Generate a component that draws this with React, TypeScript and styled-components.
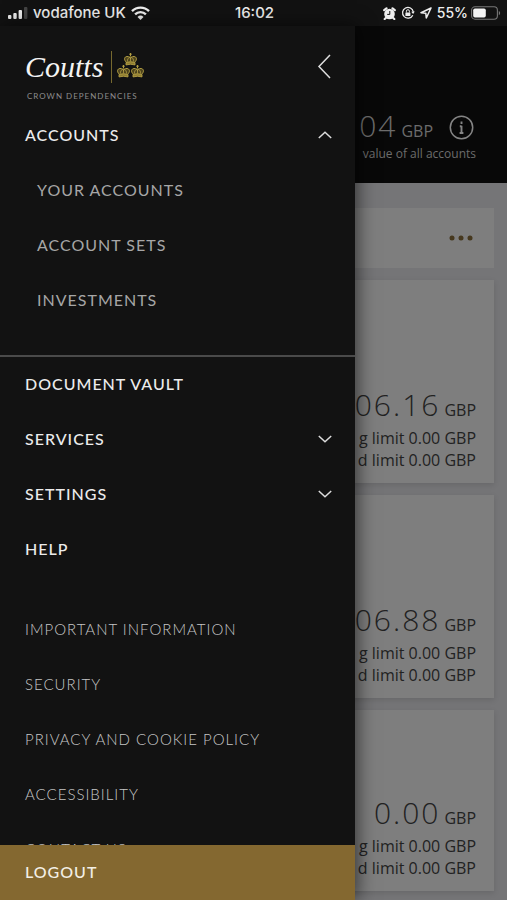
import React from "react";
import styled, { createGlobalStyle } from "styled-components";

const GlobalStyle = createGlobalStyle`
  *, *::before, *::after { box-sizing: border-box; }
  body { margin: 0; background: #121212; }
  button { font: inherit; color: inherit; background: none; border: 0; padding: 0; cursor: pointer; }
`;

const Shell = styled.div`
  display: flex;
  flex-direction: column;
  height: 100vh;
  overflow: hidden;
  background: #121212;
  font-family: "Open Sans", sans-serif;
`;

const StatusBar = styled.header`
  display: grid;
  grid-template-columns: 1fr auto 1fr;
  align-items: center;
  flex: none;
  height: 26px;
  padding: 0 6px 0 8px;
  color: #eeeeee;
  font: 500 15px/18px Inter, sans-serif;
`;

const StatusGroup = styled.div<{ $end?: boolean }>`
  display: flex;
  align-items: center;
  justify-content: ${(p) => (p.$end ? "flex-end" : "flex-start")};
  gap: 5px;
  white-space: nowrap;
`;

const Charge = styled.span`
  display: flex;
  align-items: center;
  gap: 3px;
  font-size: 14px;
`;

const Icon = styled.svg`
  display: block;
  flex: none;
`;

const Stage = styled.div`
  flex: 1;
  min-height: 0;
  display: grid;
  grid-template: minmax(0, 1fr) / minmax(0, 1fr);
`;

const Content = styled.main`
  grid-area: 1 / 1;
  overflow: hidden;
  background: #757577;
  color: #222222;
`;

const Summary = styled.section`
  display: flex;
  flex-direction: column;
  align-items: flex-end;
  height: 157px;
  padding: 82px 31px 0 0;
  background: #080808;
  color: #6c6c6c;
`;

const SummaryRow = styled.div`
  display: flex;
  align-items: center;
  gap: 16px;
  height: 38px;
  margin-right: 2px;
`;

const Caption = styled.p`
  margin: 0;
  font-size: 12px;
  line-height: 16px;
`;

const Amount = styled.p`
  display: flex;
  align-items: baseline;
  justify-content: flex-end;
  gap: 4px;
  margin: 0;
  padding-top: 2px;
  font-size: 16px;
  line-height: 34px;
  white-space: nowrap;
`;

const Figure = styled.span`
  font-size: 30px;
  font-weight: 300;
  letter-spacing: 2px;
`;

const IconButton = styled.button`
  display: block;
`;

const Cards = styled.div`
  display: flex;
  flex-direction: column;
  gap: 12px;
  padding: 25px 13px 0;
`;

const ToolbarCard = styled.section`
  display: flex;
  align-items: center;
  justify-content: flex-end;
  height: 60px;
  padding-right: 21px;
  background: #7e7e7e;
`;

const AccountCard = styled.section<{ $compact?: boolean }>`
  display: flex;
  flex-direction: column;
  justify-content: flex-end;
  min-height: ${(p) => (p.$compact ? 181 : 203)}px;
  padding: 0 18px 12px;
  background: #7e7e7e;
  box-shadow: 0 2px 6px rgba(0, 0, 0, 0.12);
  text-align: right;
`;

const Limit = styled.p`
  margin: 0;
  font-size: 16px;
  line-height: 22px;
  white-space: nowrap;
`;

const Drawer = styled.aside`
  grid-area: 1 / 1;
  z-index: 1;
  display: flex;
  flex-direction: column;
  width: 70%;
  min-height: 0;
  background: #121212;
  box-shadow: 2px 0 18px rgba(0, 0, 0, 0.6);
  font-family: Lato, sans-serif;
`;

const Brand = styled.div`
  display: flex;
  align-items: flex-start;
  justify-content: space-between;
  flex: none;
  height: 81px;
  padding: 24px 24px 0 25px;
`;

const BrandMark = styled.div`
  display: grid;
  grid-template-columns: auto 1fr;
  align-items: center;
  column-gap: 5px;
  row-gap: 6px;
`;

const Wordmark = styled.span`
  color: #f4f4f4;
  font: italic 400 30px/34px "Liberation Serif", serif;
`;

const Tagline = styled.span`
  grid-column: 1 / -1;
  padding-left: 2px;
  color: #8d8d8d;
  font-size: 8px;
  line-height: 12px;
  letter-spacing: 1px;
`;

const CloseButton = styled.button`
  display: block;
  && { padding: 4px 0; }
`;

const Menu = styled.nav`
  flex: 1;
  min-height: 0;
  overflow: hidden;
`;

const List = styled.ul<{ $divided?: boolean; $gap?: boolean }>`
  list-style: none;
  margin: 0;
  padding: 0 0 ${(p) => (p.$divided ? 28 : p.$gap ? 26 : 0)}px;
  border-bottom: ${(p) => (p.$divided ? "2px solid #4a4a4a" : "0")};

  & + & {
    margin-top: -1px;
  }
`;

const rowText = `
  display: flex;
  align-items: center;
  justify-content: space-between;
  width: 100%;
  height: 55px;
  text-align: left;
  text-decoration: none;
  white-space: nowrap;
`;

const MainButton = styled.button`
  && {
    ${rowText}
    padding: 0 23px 0 25px;
    color: #ececec;
    font-size: 16px;
    font-weight: 500;
    letter-spacing: 1px;
  }
`;

const MenuLink = styled.a<{ $kind: "main" | "sub" | "legal" }>`
  ${rowText}
  padding-left: ${(p) => (p.$kind === "sub" ? 37 : 25)}px;
  color: ${(p) => (p.$kind === "main" ? "#ececec" : p.$kind === "sub" ? "#a6a6a6" : "#c6c6c6")};
  font-size: ${(p) => (p.$kind === "legal" ? 15 : 16)}px;
  font-weight: ${(p) => (p.$kind === "main" ? 500 : p.$kind === "legal" ? 300 : 400)};
  letter-spacing: 1px;
`;

const Logout = styled.button`
  && {
    flex: none;
    height: 55px;
    padding: 0 25px 2px;
    background: #846830;
    color: #f3efe6;
    font-size: 16px;
    font-weight: 500;
    letter-spacing: 1px;
    text-align: left;
  }
`;

const Signal = () => (
  <Icon width="20" height="12" viewBox="0 0 20 12" fill="#eeeeee" aria-hidden="true">
    <rect x="0" y="8" width="3.4" height="4" rx="1" />
    <rect x="5.3" y="6" width="3.4" height="6" rx="1" />
    <rect x="10.6" y="3" width="3.4" height="9" rx="1" />
    <rect x="16" y="0" width="3.4" height="12" rx="1" fill="#444444" />
  </Icon>
);

const Wifi = () => (
  <Icon width="19" height="14" viewBox="0 0 19 14" fill="none" stroke="#eeeeee" strokeWidth="2.4" aria-hidden="true">
    <path d="M1 5.2a12 12 0 0 1 17 0" />
    <path d="M4.1 8.4a7.6 7.6 0 0 1 10.8 0" />
    <path d="M9.5 14 6.5 10.9a4.3 4.3 0 0 1 6 0Z" fill="#eeeeee" stroke="none" />
  </Icon>
);

const Alarm = () => (
  <Icon width="13" height="13" viewBox="0 0 13 13" aria-hidden="true">
    <circle cx="6.5" cy="7" r="5.3" fill="#eeeeee" />
    <path d="M1.2 3.2 3.5 1.3M11.8 3.2 9.5 1.3M2.8 11 1.7 12M10.2 11l1.1 1" stroke="#eeeeee" strokeWidth="2.2" strokeLinecap="round" />
    <path d="M6.8 4v3.4H4.2" fill="none" stroke="#121212" strokeWidth="1" />
  </Icon>
);

const RotationLock = () => (
  <Icon width="14" height="14" viewBox="0 0 14 14" fill="none" stroke="#eeeeee" aria-hidden="true">
    <path d="M11.8 9.2A5.4 5.4 0 1 1 12.3 6" strokeWidth="1.3" />
    <path d="m10.2 5.8 3.6-.2-1.7 2.5Z" fill="#eeeeee" stroke="none" />
    <rect x="4.4" y="6.4" width="5" height="3.7" rx=".5" fill="#eeeeee" stroke="none" />
    <path d="M5.4 6.5V5.2a1.5 1.5 0 0 1 3 0v1.3" />
  </Icon>
);

const LocationArrow = () => (
  <Icon width="12" height="12" viewBox="0 0 12 12" fill="none" stroke="#eeeeee" strokeWidth="1.5" strokeLinejoin="round" aria-hidden="true">
    <path d="M11 1 1 5.8l4.8.4.5 4.8Z" />
  </Icon>
);

const Battery = () => (
  <Icon width="30" height="14" viewBox="0 0 30 14" aria-hidden="true">
    <rect x=".6" y=".8" width="25.8" height="12.4" rx="3.4" fill="none" stroke="#777777" strokeWidth="1.1" />
    <rect x="2.2" y="2.4" width="12.6" height="9.2" rx="1.8" fill="#f4f4f4" />
    <path d="M27.8 4.9c1.8.6 1.8 3.6 0 4.2Z" fill="#777777" />
  </Icon>
);

const Crown = ({ x, y }: { x: number; y: number }) => (
  <g transform={`translate(${x} ${y})`} fill="none" stroke="#b5a044" strokeWidth="1">
    <path d="M6.5 0v3M5.2 1.2h2.6" />
    <path d="M2.4 9.2C-.7 6.6.5 3.6 3 3.5c1.8-.1 3.1 1 3.5 2.2C6.9 4.5 8.2 3.4 10 3.5c2.5.1 3.7 3.1.6 5.7" fill="#4d431d" />
    <path d="M3.6 8.6C3 6.6 4.3 5 6.5 3.2 8.7 5 10 6.6 9.4 8.6M6.5 4v4.5" strokeWidth=".8" />
    <path d="M2 9.5q4.5-1.5 9 0v2.4q-4.5-1.3-9 0Z" fill="#8f7d32" strokeWidth=".9" />
  </g>
);

const Crest = () => (
  <Icon width="38" height="34" viewBox="0 0 38 34" role="img" aria-label="Three crowns">
    <path d="M3.5 1v32" stroke="#77692f" />
    <Crown x={16} y={3} />
    <Crown x={9} y={15} />
    <Crown x={23} y={15} />
  </Icon>
);

const Chevron = ({ up }: { up?: boolean }) => (
  <Icon width="14" height="8" viewBox="0 0 14 8" fill="none" stroke="#dcdcdc" strokeWidth="1.5" aria-hidden="true">
    <path d={up ? "M.8 7 7 1.2 13.2 7" : "M.8 1 7 6.8 13.2 1"} />
  </Icon>
);

const accounts = [
  { figure: "06.16", compact: false },
  { figure: "06.88", compact: false },
  { figure: "0.00", compact: true },
];

export default function App() {
  return (
    <Shell>
      <GlobalStyle />
      <StatusBar>
        <StatusGroup>
          <Signal />
          <span>vodafone UK</span>
          <Wifi />
        </StatusGroup>
        <span>16:02</span>
        <StatusGroup $end>
          <Alarm />
          <RotationLock />
          <LocationArrow />
          <Charge>55%<Battery /></Charge>
        </StatusGroup>
      </StatusBar>
      <Stage>
        <Drawer>
          <Brand>
            <BrandMark>
              <Wordmark>Coutts</Wordmark>
              <Crest />
              <Tagline>CROWN DEPENDENCIES</Tagline>
            </BrandMark>
            <CloseButton aria-label="Close menu">
              <Icon width="14" height="25" viewBox="0 0 14 25" fill="none" stroke="#dedede" strokeWidth="1.5">
                <path d="M13 1 2 12.5 13 24" />
              </Icon>
            </CloseButton>
          </Brand>
          <Menu aria-label="Main menu">
            <List $divided>
              <li><MainButton aria-expanded="true">ACCOUNTS<Chevron up /></MainButton></li>
              <li><MenuLink $kind="sub" href="#accounts">YOUR ACCOUNTS</MenuLink></li>
              <li><MenuLink $kind="sub" href="#sets">ACCOUNT SETS</MenuLink></li>
              <li><MenuLink $kind="sub" href="#investments">INVESTMENTS</MenuLink></li>
            </List>
            <List $gap>
              <li><MenuLink $kind="main" href="#vault">DOCUMENT VAULT</MenuLink></li>
              <li><MainButton aria-expanded="false">SERVICES<Chevron /></MainButton></li>
              <li><MainButton aria-expanded="false">SETTINGS<Chevron /></MainButton></li>
              <li><MenuLink $kind="main" href="#help">HELP</MenuLink></li>
            </List>
            <List>
              <li><MenuLink $kind="legal" href="#information">IMPORTANT INFORMATION</MenuLink></li>
              <li><MenuLink $kind="legal" href="#security">SECURITY</MenuLink></li>
              <li><MenuLink $kind="legal" href="#privacy">PRIVACY AND COOKIE POLICY</MenuLink></li>
              <li><MenuLink $kind="legal" href="#accessibility">ACCESSIBILITY</MenuLink></li>
              <li><MenuLink $kind="legal" href="#contact">CONTACT US</MenuLink></li>
            </List>
          </Menu>
          <Logout>LOGOUT</Logout>
        </Drawer>
        <Content>
          <Summary>
            <SummaryRow>
              <Amount><Figure>04</Figure>GBP</Amount>
              <IconButton aria-label="About this value">
                <Icon width="25" height="25" viewBox="0 0 25 25" fill="none" stroke="#858585">
                  <circle cx="12.5" cy="12.5" r="11.2" strokeWidth="1.5" />
                  <path d="M12.5 6.5v2.4M12.5 10.7v7.3M10.8 11.2h1.7M10.6 18h3.8" strokeWidth="1.9" />
                </Icon>
              </IconButton>
            </SummaryRow>
            <Caption>value of all accounts</Caption>
          </Summary>
          <Cards>
            <ToolbarCard>
              <IconButton aria-label="More options">
                <Icon width="24" height="6" viewBox="0 0 24 6" fill="#46381e">
                  <circle cx="3" cy="3" r="2.5" />
                  <circle cx="12" cy="3" r="2.5" />
                  <circle cx="21" cy="3" r="2.5" />
                </Icon>
              </IconButton>
            </ToolbarCard>
            {accounts.map((account) => (
              <AccountCard key={account.figure} $compact={account.compact}>
                <Amount><Figure>{account.figure}</Figure>GBP</Amount>
                <Limit>g limit 0.00 GBP</Limit>
                <Limit>d limit 0.00 GBP</Limit>
              </AccountCard>
            ))}
          </Cards>
        </Content>
      </Stage>
    </Shell>
  );
}
